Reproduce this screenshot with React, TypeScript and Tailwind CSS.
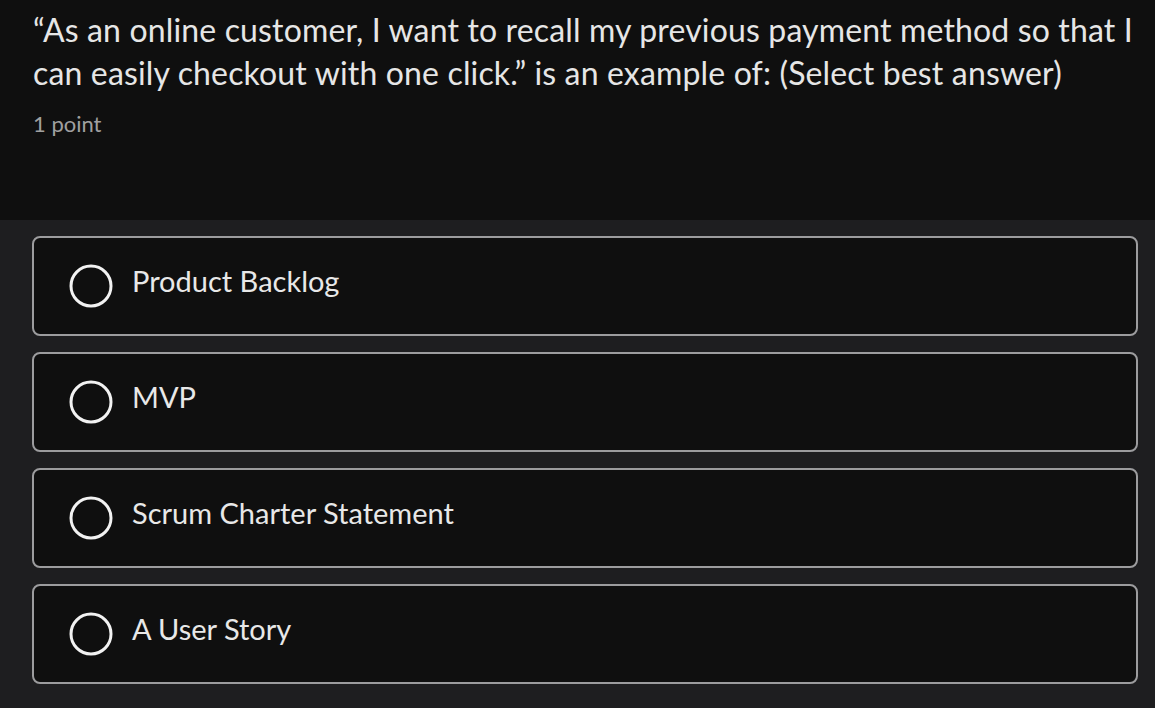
import React from 'react';

const options = ['Product Backlog', 'MVP', 'Scrum Charter Statement', 'A User Story'];

function Radio() {
  return (
    <svg width="44" height="44" viewBox="0 0 44 44" className="shrink-0">
      <circle cx="22" cy="22" r="20" fill="none" stroke="#f2f2f2" strokeWidth="3" />
    </svg>
  );
}

export default function App() {
  return (
    <div
      className="w-[1155px] h-[708px] overflow-hidden bg-[#1e1e20] text-[#e8e8e8]"
      style={{ fontFamily: 'Lato, "Open Sans", sans-serif' }}
    >
      {/* Question */}
      <div className="h-[220px] bg-[#0f0f0f] pl-[33px] pr-4 pt-[8px]">
        <p className="text-[32px] leading-[43px] tracking-[0.15px] text-[#e6e6e6]">
          “As an online customer, I want to recall my previous payment method so that I can easily checkout with one click.” is an example of: (Select best answer)
        </p>
        <p className="mt-[13px] text-[22px] text-[#a0a0a0]">1 point</p>
      </div>

      {/* Options */}
      <div className="flex flex-col gap-4 px-8 pt-4 pr-[17px]">
        {options.map((opt) => (
          <div
            key={opt}
            className="flex h-[100px] items-center gap-[19px] rounded-lg border-2 border-[#9c9c9e] bg-[#0f0f0f] pl-[35px]"
          >
            <Radio />
            <span className="mb-[10px] text-[29px] text-[#e8e8e8]">{opt}</span>
          </div>
        ))}
      </div>
    </div>
  );
}
